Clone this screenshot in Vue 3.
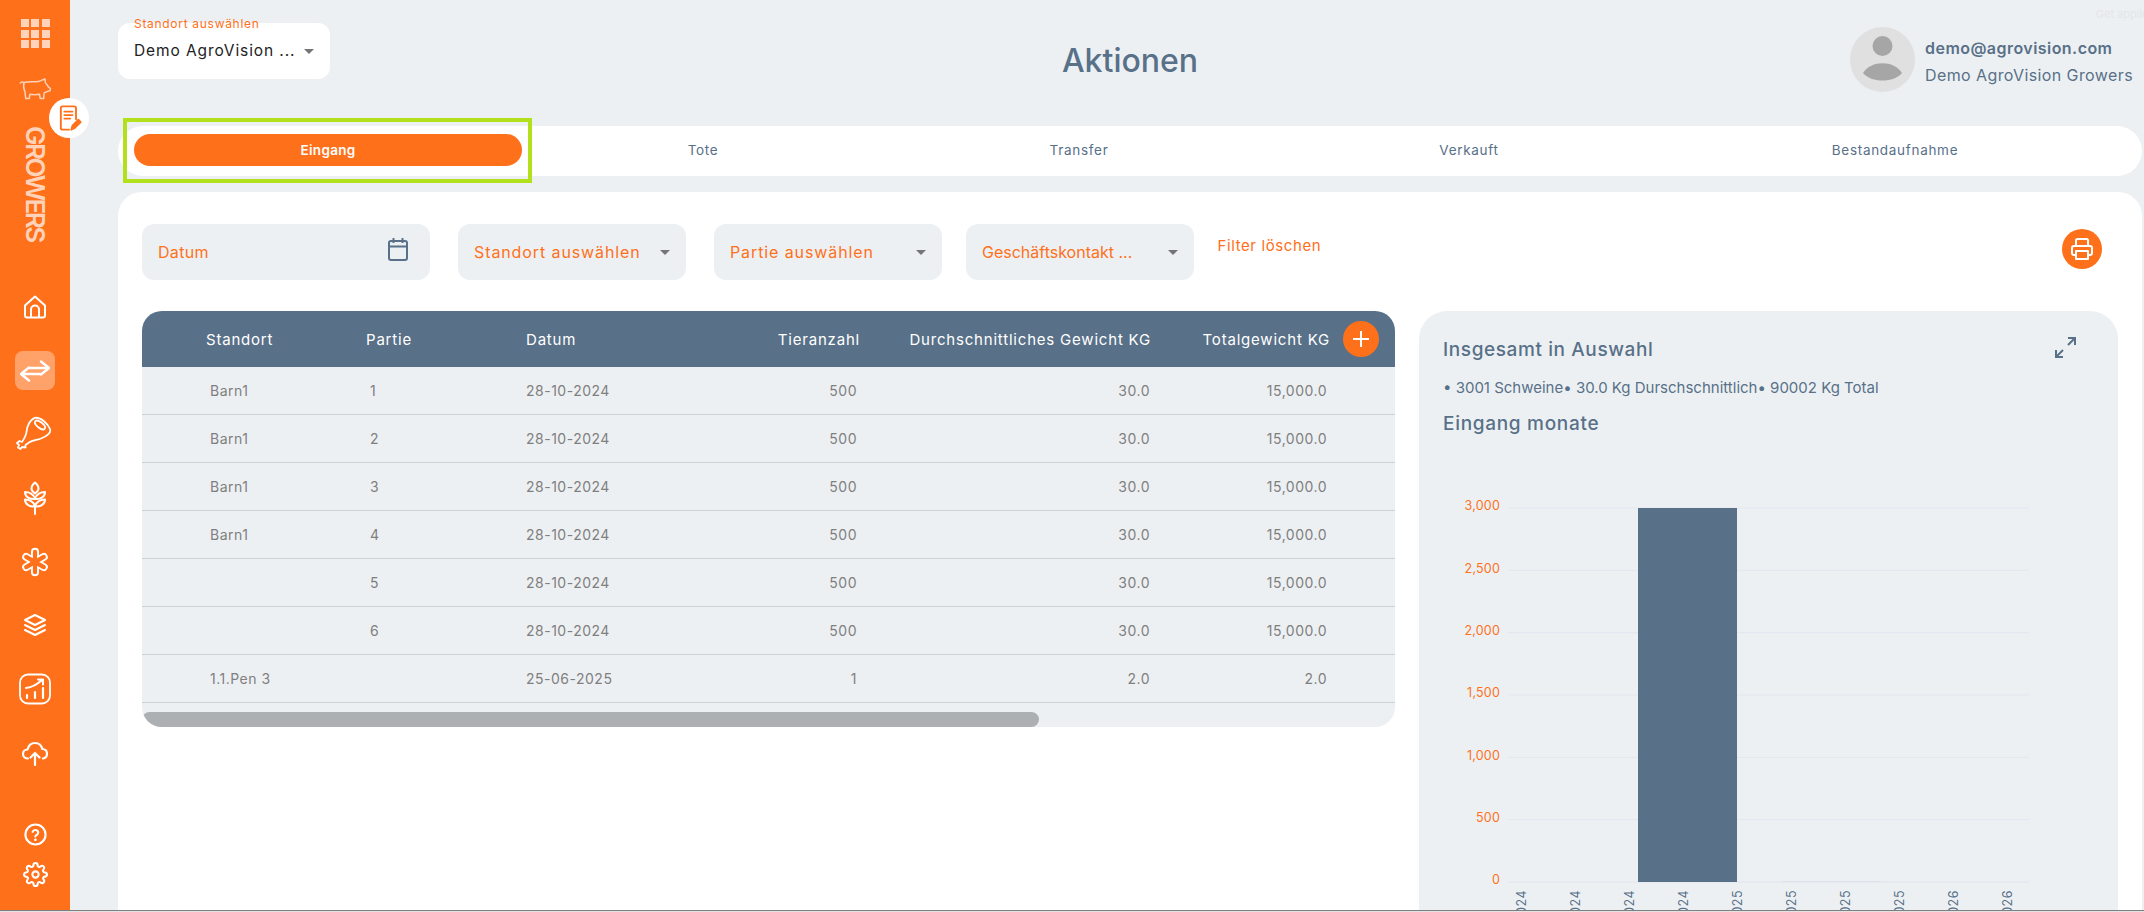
<script setup>
const tabs = ['Eingang', 'Tote', 'Transfer', 'Verkauft', 'Bestandaufnahme']
const rows = [
  ['Barn1', '1', '28-10-2024', '500', '30.0', '15,000.0'],
  ['Barn1', '2', '28-10-2024', '500', '30.0', '15,000.0'],
  ['Barn1', '3', '28-10-2024', '500', '30.0', '15,000.0'],
  ['Barn1', '4', '28-10-2024', '500', '30.0', '15,000.0'],
  ['', '5', '28-10-2024', '500', '30.0', '15,000.0'],
  ['', '6', '28-10-2024', '500', '30.0', '15,000.0'],
  ['1.1.Pen 3', '', '25-06-2025', '1', '2.0', '2.0'],
]
const ticks = ['3,000', '2,500', '2,000', '1,500', '1,000', '500', '0'].map((label, i) => ({
  label,
  y: 68 + i * 62.33,
}))
const months = ['07-2024', '08-2024', '09-2024', '10-2024', '01-2025', '06-2025', '07-2025', '10-2025', '01-2026', '02-2026']
const xLabels = months.map((label, i) => ({ label, x: 104 + i * 54 }))
</script>

<template>
  <div class="app">
    <div class="body">
      <aside class="side">
        <div class="apps"><i v-for="n in 9" :key="n"></i></div>
        <svg class="pig" viewBox="0 0 32 22" fill="none" stroke="#ffd3ba" stroke-width="1.5" stroke-linejoin="round" stroke-linecap="round">
          <path d="M.8 5c1.200-1.200 2.700-1.200 3.700-.5C9 3 15 4 19 3.500c1.500-.2 3-1 4.500-1.800L25.500 1l.5 4c1.200.8 2 2.500 2.800 3.800l2.200 1.700-.5 2.200-3.500 1-2.500 1.500-.3 5.300h-3.500l-.7-4.300c-3 .6-6.500.6-9.500 0l-.8 4.300H6.200L5.500 14C4 11 3.800 7.500 4.500 4.500"/>
        </svg>
        <div class="brand">GROWERS</div>
        <div class="note">
          <svg viewBox="0 0 24 24" fill="none" stroke="#ff701a" stroke-width="1.600" stroke-linecap="round" stroke-linejoin="round">
            <path d="M12 22H6.500A1.500 1.500 0 0 1 5 20.500v-17A1.500 1.500 0 0 1 6.500 2h10A1.500 1.500 0 0 1 18 3.500V13"/>
            <path d="M8 6.500h7M8 9.500h7M8 12.500h5"/>
            <path d="M14 22l1-3.500 5-5 2 2-5 5z" fill="#ff701a"/>
          </svg>
        </div>
        <nav class="nav">
          <a class="item">
            <svg width="24" height="24" viewBox="0 0 24 24" fill="none" stroke="#fff" stroke-width="2" stroke-linejoin="round">
              <path d="M2 10.500 12 1.500l10 9v10a2 2 0 0 1-2 2H4a2 2 0 0 1-2-2z"/>
              <path d="M8 22.500v-8a4 4 0 0 1 8 0v8"/>
            </svg>
          </a>
          <a class="item active">
            <svg width="30" height="22" viewBox="0 0 30 22" fill="none" stroke="#fff" stroke-width="2.400" stroke-linecap="round" stroke-linejoin="round">
              <path d="M10 8h19M21 1.500 29 8l-8 6.500"/>
              <path d="M20 14H1M9 7.500 1 14l8 6.500"/>
            </svg>
          </a>
          <a class="item">
            <svg class="ham" width="36" height="36" viewBox="0 0 36 36" fill="none" stroke="#fff" stroke-width="1.800" stroke-linecap="round" stroke-linejoin="round">
              <path d="M19 1.800C25 1 32 8 34 13 35.500 17 31 20 25 22.500 21 24 16 24.500 13 26.500 11.500 27.500 10.500 28.500 9.500 29L9.500 31.500 6 31 4.500 33 2 31.500 3 29 1 27 3.500 25 6 26C8 23 10 20 10.500 16 11 10 14 3.500 19 1.800z"/>
              <ellipse cx="24" cy="9" rx="6" ry="2.800" transform="rotate(38 24 9)"/>
            </svg>
          </a>
          <a class="item">
            <svg width="24" height="34" viewBox="0 0 24 34" fill="none" stroke="#fff" stroke-width="2" stroke-linejoin="round" stroke-linecap="round">
              <path d="M12 1.500c2.500 2 3.500 4 3.500 6s-1.500 3.500-3.500 5c-2-1.500-3.500-3-3.500-5s1-4 3.500-6z"/>
              <path d="M2 11c4 0 9 2 10 7-5 .5-10-2-10-7zM22 11c-4 0-9 2-10 7 5 .5 10-2 10-7z"/>
              <path d="M2 18.500c4 0 9 2 10 7-5 .5-10-2-10-7zM22 18.500c-4 0-9 2-10 7 5 .5 10-2 10-7z"/>
              <path d="M12 25v8"/>
            </svg>
          </a>
          <a class="item">
            <svg width="30" height="30" viewBox="0 0 30 30" fill="none" stroke-linecap="round" overflow="visible">
              <g stroke="#fff" stroke-width="8">
                <path d="M15 4.800v20.400M6.200 9.900l17.600 10.200M6.200 20.100l17.600-10.200"/>
              </g>
              <g stroke="#ff701a" stroke-width="4.200">
                <path d="M15 4.800v20.400M6.200 9.900l17.600 10.200M6.200 20.100l17.600-10.200"/>
              </g>
            </svg>
          </a>
          <a class="item">
            <svg width="24" height="24" viewBox="0 0 24 24" fill="none" stroke="#fff" stroke-width="2" stroke-linejoin="round" stroke-linecap="round">
              <path d="M12 2 22 7l-10 5L2 7z"/>
              <path d="M2 12l10 5 10-5M2 17l10 5 10-5"/>
            </svg>
          </a>
          <a class="item">
            <svg width="32" height="32" viewBox="0 0 32 32" fill="none" stroke="#fff" stroke-width="1.800" stroke-linecap="round" stroke-linejoin="round">
              <rect x="1" y="1.500" width="30" height="29" rx="8"/>
              <path d="M7 15c4-.5 10-2.500 16-8M19 6.500h5v5" stroke-width="2"/>
              <path d="M8 25v-3M16 25v-6M24 25V15" stroke-width="2.200"/>
            </svg>
          </a>
          <a class="item">
            <svg width="26" height="26" viewBox="0 0 26 26" fill="none" stroke="#fff" stroke-width="2.200" stroke-linecap="round" stroke-linejoin="round">
              <path d="M6 18.500c-3 0-5-2-5-4.500 0-2.800 2-4.500 4.500-4.500C6.500 5.500 9.500 3 13 3c4 0 6.500 2.500 7.300 6 2.800 0 4.700 2 4.700 4.700 0 2.500-1.500 4.300-4 4.800"/>
              <path d="M13 25V13M8.500 17.500 13 13l4.500 4.500"/>
            </svg>
          </a>
          <div class="spacer"></div>
          <a class="item small">
            <svg width="23" height="23" viewBox="0 0 24 24" fill="none" stroke="#fff" stroke-width="2.200" stroke-linecap="round" stroke-linejoin="round">
              <circle cx="12" cy="12" r="10.500"/>
              <path d="M9 9.200a3 3 0 0 1 5.800 1c0 2-3 2.800-3 4"/>
              <path d="M11.900 17.500h.01" stroke-width="2.800"/>
            </svg>
          </a>
          <a class="item small">
            <svg width="25" height="25" viewBox="0 0 24 24" fill="none" stroke="#fff" stroke-width="2" stroke-linecap="round" stroke-linejoin="round">
              <circle cx="12" cy="12" r="3"/>
              <path d="M19.400 15a1.650 1.650 0 0 0 .33 1.820l.06.06a2 2 0 0 1 0 2.830 2 2 0 0 1-2.830 0l-.06-.06a1.650 1.650 0 0 0-1.820-.33 1.650 1.650 0 0 0-1 1.510V21a2 2 0 0 1-2 2 2 2 0 0 1-2-2v-.09A1.650 1.650 0 0 0 9 19.400a1.650 1.650 0 0 0-1.820.33l-.06.06a2 2 0 0 1-2.830 0 2 2 0 0 1 0-2.830l.06-.06a1.650 1.650 0 0 0 .33-1.820 1.650 1.650 0 0 0-1.510-1H3a2 2 0 0 1-2-2 2 2 0 0 1 2-2h.09A1.650 1.650 0 0 0 4.600 9a1.650 1.650 0 0 0-.33-1.820l-.06-.06a2 2 0 0 1 0-2.830 2 2 0 0 1 2.830 0l.06.06a1.650 1.650 0 0 0 1.820.33H9a1.650 1.650 0 0 0 1-1.510V3a2 2 0 0 1 2-2 2 2 0 0 1 2 2v.09a1.650 1.650 0 0 0 1 1.510 1.650 1.650 0 0 0 1.820-.33l.06-.06a2 2 0 0 1 2.830 0 2 2 0 0 1 0 2.830l-.06.06a1.650 1.650 0 0 0-.33 1.820V9a1.650 1.650 0 0 0 1.510 1H21a2 2 0 0 1 2 2 2 2 0 0 1-2 2h-.09a1.650 1.650 0 0 0-1.510 1z"/>
            </svg>
          </a>
        </nav>
      </aside>

      <main class="content">
        <span class="faint">Get application</span>
        <header class="top">
          <div class="site">
            <span class="site-label">Standort auswählen</span>
            <span class="site-value">Demo AgroVision ...</span>
            <i class="caret"></i>
          </div>
          <h1 class="title">Aktionen</h1>
          <div class="user">
            <svg class="avatar" viewBox="0 0 65 65">
              <circle cx="32.500" cy="32.500" r="32.500" fill="#e0e0e0"/>
              <circle cx="32.500" cy="19" r="10" fill="#a6a6a6"/>
              <path d="M13 46c8-13 31-13 39 0-8 10-31 10-39 0z" fill="#a6a6a6"/>
            </svg>
            <div class="user-text">
              <div class="mail">demo@agrovision.com</div>
              <div class="org">Demo AgroVision Growers</div>
            </div>
          </div>
        </header>

        <div class="tabs">
          <div v-for="(t, i) in tabs" :key="t" class="tab" :class="{ on: i === 0 }">
            {{ t }}
            <span v-if="i === 0" class="mark"></span>
          </div>
        </div>

        <section class="card">
          <div class="filters">
            <div class="field date">
              <span>Datum</span>
              <svg class="cal" width="20" height="23" viewBox="0 0 20 23" fill="none" stroke="#587088" stroke-width="2">
                <rect x="1" y="3" width="18" height="19" rx="2"/>
                <path d="M1 8.500h18M5.500 0v5M14.500 0v5"/>
              </svg>
            </div>
            <div class="field"><span>Standort auswählen</span><i class="caret"></i></div>
            <div class="field"><span>Partie auswählen</span><i class="caret"></i></div>
            <div class="field tight"><span>Geschäftskontakt ...</span><i class="caret"></i></div>
            <a class="clear">Filter löschen</a>
            <button class="print" type="button" aria-label="Drucken">
              <svg width="24" height="24" viewBox="0 0 24 24" fill="none" stroke="#fff" stroke-width="2" stroke-linejoin="round">
                <path d="M6 9V3.500A1.500 1.500 0 0 1 7.500 2h9A1.500 1.500 0 0 1 18 3.500V9"/>
                <path d="M6 18H4a2 2 0 0 1-2-2v-5a2 2 0 0 1 2-2h16a2 2 0 0 1 2 2v5a2 2 0 0 1-2 2h-2"/>
                <rect x="6" y="14" width="12" height="8"/>
              </svg>
            </button>
          </div>

          <div class="columns">
            <div class="table">
              <div class="row head">
                <span class="c1">Standort</span>
                <span class="c2">Partie</span>
                <span class="c3">Datum</span>
                <span class="c4">Tieranzahl</span>
                <span class="c5">Durchschnittliches Gewicht KG</span>
                <span class="c6">Totalgewicht KG</span>
                <span class="c7">
                  <button class="add" type="button" aria-label="Hinzufügen">
                    <svg width="16" height="16" viewBox="0 0 16 16" stroke="#fff" stroke-width="2"><path d="M8 0v16M0 8h16"/></svg>
                  </button>
                </span>
              </div>
              <div v-for="(r, i) in rows" :key="i" class="row line">
                <span class="c1">{{ r[0] }}</span>
                <span class="c2">{{ r[1] }}</span>
                <span class="c3">{{ r[2] }}</span>
                <span class="c4">{{ r[3] }}</span>
                <span class="c5">{{ r[4] }}</span>
                <span class="c6">{{ r[5] }}</span>
                <span class="c7"></span>
              </div>
              <div class="track"><div class="thumb"></div></div>
            </div>

            <div class="panel">
              <div class="panel-head">
                <h2>Insgesamt in Auswahl</h2>
                <svg width="21" height="21" viewBox="0 0 21 21" fill="none" stroke="#587088" stroke-width="2">
                  <path d="M13 1h7v7M20 1l-7 7M1 13v7h7M1 20l7-7"/>
                </svg>
              </div>
              <p class="sum">• 3001 Schweine• 30.0 Kg Durschschnittlich• 90002 Kg Total</p>
              <h2 class="sub">Eingang monate</h2>
              <svg class="chart" width="699" height="470" viewBox="0 0 699 470">
                <g v-for="t in ticks" :key="t.label">
                  <line x1="89" :x2="610" :y1="t.y" :y2="t.y" stroke="#e0e6f0"/>
                  <text x="81" :y="t.y - 1" text-anchor="end" class="ytick">{{ t.label }}</text>
                </g>
                <rect x="219" y="68" width="99" height="374" fill="#587088"/>
                <rect x="363" y="441" width="99" height="1" fill="#dfe4ec"/>
                <text
                  v-for="l in xLabels"
                  :key="l.label"
                  class="xtick"
                  text-anchor="end"
                  :transform="`translate(${l.x} 450) rotate(-90)`"
                >{{ l.label }}</text>
              </svg>
            </div>
          </div>
        </section>
      </main>
    </div>
    <div class="edge"></div>
  </div>
</template>

<style>
html, body { margin: 0; overflow: hidden; }
</style>

<style scoped>
.app {
  width: 2144px;
  height: 912px;
  display: flex;
  flex-direction: column;
  overflow: hidden;
  background: #edf0f3;
  font-family: Inter, "Noto Sans", sans-serif;
  color: #587088;
}
.body { flex: 1; min-height: 0; display: flex; }
.edge { height: 2px; background: #e3e3e3; border-top: 1px solid #808080; box-sizing: border-box; }

.side {
  width: 70px;
  flex: none;
  background: #ff701a;
  position: relative;
  display: flex;
  flex-direction: column;
  align-items: center;
}
.apps {
  margin-top: 19px;
  display: grid;
  grid-template-columns: repeat(3, 8px);
  grid-auto-rows: 8px;
  gap: 2.5px;
}
.apps i { background: #ffd3ba; }
.pig { width: 33px; height: 22px; margin-top: 30px; }
.brand {
  writing-mode: vertical-rl;
  margin-top: 26px;
  font-size: 26px;
  line-height: 26px;
  font-weight: 600;
  letter-spacing: -2.5px;
  color: #ffd3ba;
  height: 115px;
}
.note {
  position: absolute;
  left: 49px;
  top: 98px;
  width: 40px;
  height: 40px;
  border-radius: 50%;
  background: #fff;
  display: flex;
  align-items: center;
  justify-content: center;
  z-index: 2;
}
.note svg { width: 28px; height: 28px; }
.nav {
  flex: 1;
  align-self: stretch;
  margin-top: 34px;
  padding-bottom: 16px;
  display: flex;
  flex-direction: column;
  align-items: center;
}
.item { height: 63.7px; flex: none; display: flex; align-items: center; justify-content: center; }
.item.active { position: relative; }
.item.active::before {
  content: "";
  position: absolute;
  left: -5px;
  right: -5px;
  top: 12px;
  bottom: 12px;
  border-radius: 8px;
  background: rgba(255, 255, 255, .35);
}
.item.active svg { position: relative; }
.ham { margin-left: -2px; }
.item.small { height: 40px; }
.spacer { flex: 1; }

.content { flex: 1; min-width: 0; position: relative; padding: 0 2px 0 48px; display: flex; flex-direction: column; }
.faint { position: absolute; right: -30px; top: 7px; font-size: 11px; color: #e3e6ea; }

.top {
  height: 126px;
  flex: none;
  box-sizing: border-box;
  display: grid;
  grid-template-columns: 1fr auto 1fr;
  align-items: start;
}
.site {
  width: 212px;
  height: 56px;
  margin-top: 23px;
  border-radius: 12px;
  background: #fff;
  position: relative;
  display: flex;
  align-items: center;
  padding: 0 16px;
  box-sizing: border-box;
}
.site-label { position: absolute; left: 16px; top: -6px; font-size: 12px; line-height: 14px; letter-spacing: .7px; color: #ff701a; white-space: nowrap; }
.site-value { font-size: 15.500px; line-height: 56px; letter-spacing: .9px; color: #222; flex: 1; white-space: nowrap; }
.caret {
  width: 0;
  height: 0;
  flex: none;
  border-left: 5px solid transparent;
  border-right: 5px solid transparent;
  border-top: 5px solid #757575;
}
.title { margin: 41px 0 0; font-size: 32px; line-height: 40px; font-weight: 500; color: #587088; }
.user { justify-self: end; display: flex; align-items: flex-start; gap: 10px; margin-top: 27px; padding-right: 9px; }
.avatar { width: 65px; height: 65px; flex: none; }
.user-text { padding-top: 9px; white-space: nowrap; }
.mail { font-size: 16px; line-height: 24px; font-weight: 600; letter-spacing: .45px; color: #587088; }
.org { font-size: 16px; line-height: 24px; margin-top: 3px; letter-spacing: .4px; color: #587088; }

.tabs {
  height: 50px;
  flex: none;
  box-sizing: border-box;
  background: #fff;
  border-radius: 25px;
  padding: 8px 16px;
  display: grid;
  grid-template-columns: 388px 362px 390px 390px 1fr;
  font-size: 13.500px;
}
.tab { height: 32px; line-height: 32px; text-align: center; border-radius: 16px; position: relative; color: #587088; letter-spacing: .7px; }
.tab.on { background: #ff701a; color: #fff; font-weight: 600; letter-spacing: .3px; }
.mark {
  position: absolute;
  left: -11px;
  top: -16px;
  width: 409px;
  height: 65px;
  box-sizing: border-box;
  border: 4.500px solid #b2e01a;
}

.card {
  flex: 1;
  min-height: 0;
  margin-top: 16px;
  background: #fff;
  border-radius: 24px 24px 0 0;
  padding: 32px 24px 0;
  overflow: hidden;
}
.filters { display: flex; align-items: flex-start; gap: 28px; height: 56px; margin-bottom: 31px; }
.field {
  width: 228px;
  height: 56px;
  flex: none;
  box-sizing: border-box;
  border-radius: 12px;
  background: #edf0f3;
  padding: 0 16px;
  display: flex;
  align-items: center;
  justify-content: space-between;
  color: #ff701a;
  font-size: 16px;
  letter-spacing: .9px;
  white-space: nowrap;
}
.field.date { width: 288px; letter-spacing: .3px; }
.field.tight { margin-left: -4px; letter-spacing: 0; }
.cal { margin: -6px 6px 0 0; }
.clear { margin: 12px 0 0 -4.500px; font-size: 15px; line-height: 20px; letter-spacing: .6px; color: #ff701a; white-space: nowrap; }
.print {
  margin: 5px 16px 0 auto;
  width: 40px;
  height: 40px;
  border: 0;
  padding: 0;
  border-radius: 50%;
  background: #ff701a;
  display: flex;
  align-items: center;
  justify-content: center;
}

.columns { display: flex; align-items: flex-start; gap: 24px; }
.table {
  width: 1253px;
  flex: none;
  height: 416px;
  border-radius: 20px;
  background: #edf0f3;
  overflow: hidden;
}
.row { display: grid; grid-template-columns: 224px 160px 160px 174px 291px 179px 65px; align-items: center; white-space: nowrap; }
.head { height: 56px; background: #587088; color: #fff; font-size: 15px; letter-spacing: .8px; }
.line { height: 48px; box-sizing: border-box; border-bottom: 1px solid #cdd2d7; color: #7f7f7f; font-size: 14px; letter-spacing: .5px; }
.c1 { padding-left: 64px; }
.c2 { padding-left: 0; }
.c4, .c5, .c6 { text-align: right; }
.line .c1 { padding-left: 68px; }
.line .c2 { padding-left: 4px; }
.line .c4 { padding-right: 3px; }
.line .c5 { padding-right: 1px; }
.line .c6 { padding-right: 3px; }
.c7 { padding-left: 13px; }
.add {
  width: 36px;
  height: 36px;
  border: 0;
  padding: 0;
  border-radius: 50%;
  background: #ff701a;
  display: flex;
  align-items: center;
  justify-content: center;
}
.track { margin-top: 9px; height: 15px; }
.thumb { width: 897px; height: 15px; border-radius: 8px; background: #adb0b3; }

.panel {
  width: 699px;
  flex: none;
  height: 640px;
  box-sizing: border-box;
  border-radius: 28px;
  background: #edf0f3;
  padding: 26px 24px 0;
}
.panel-head { display: flex; justify-content: space-between; align-items: flex-start; padding-right: 18px; }
h2 { margin: 0; font-size: 19px; line-height: 26px; font-weight: 500; letter-spacing: .6px; color: #587088; }
.sum { margin: 13px 0 0; font-size: 15px; line-height: 24px; color: #587088; white-space: nowrap; }
.sub { margin-top: 11px; letter-spacing: .7px; }
.chart { display: block; margin: 3px 0 0 -24px; }
.ytick { font-size: 12.500px; letter-spacing: .2px; fill: #ff701a; dominant-baseline: middle; font-family: Inter, sans-serif; }
.xtick { font-size: 12.500px; fill: #587088; font-family: Inter, sans-serif; letter-spacing: .5px; dominant-baseline: middle; }
</style>
